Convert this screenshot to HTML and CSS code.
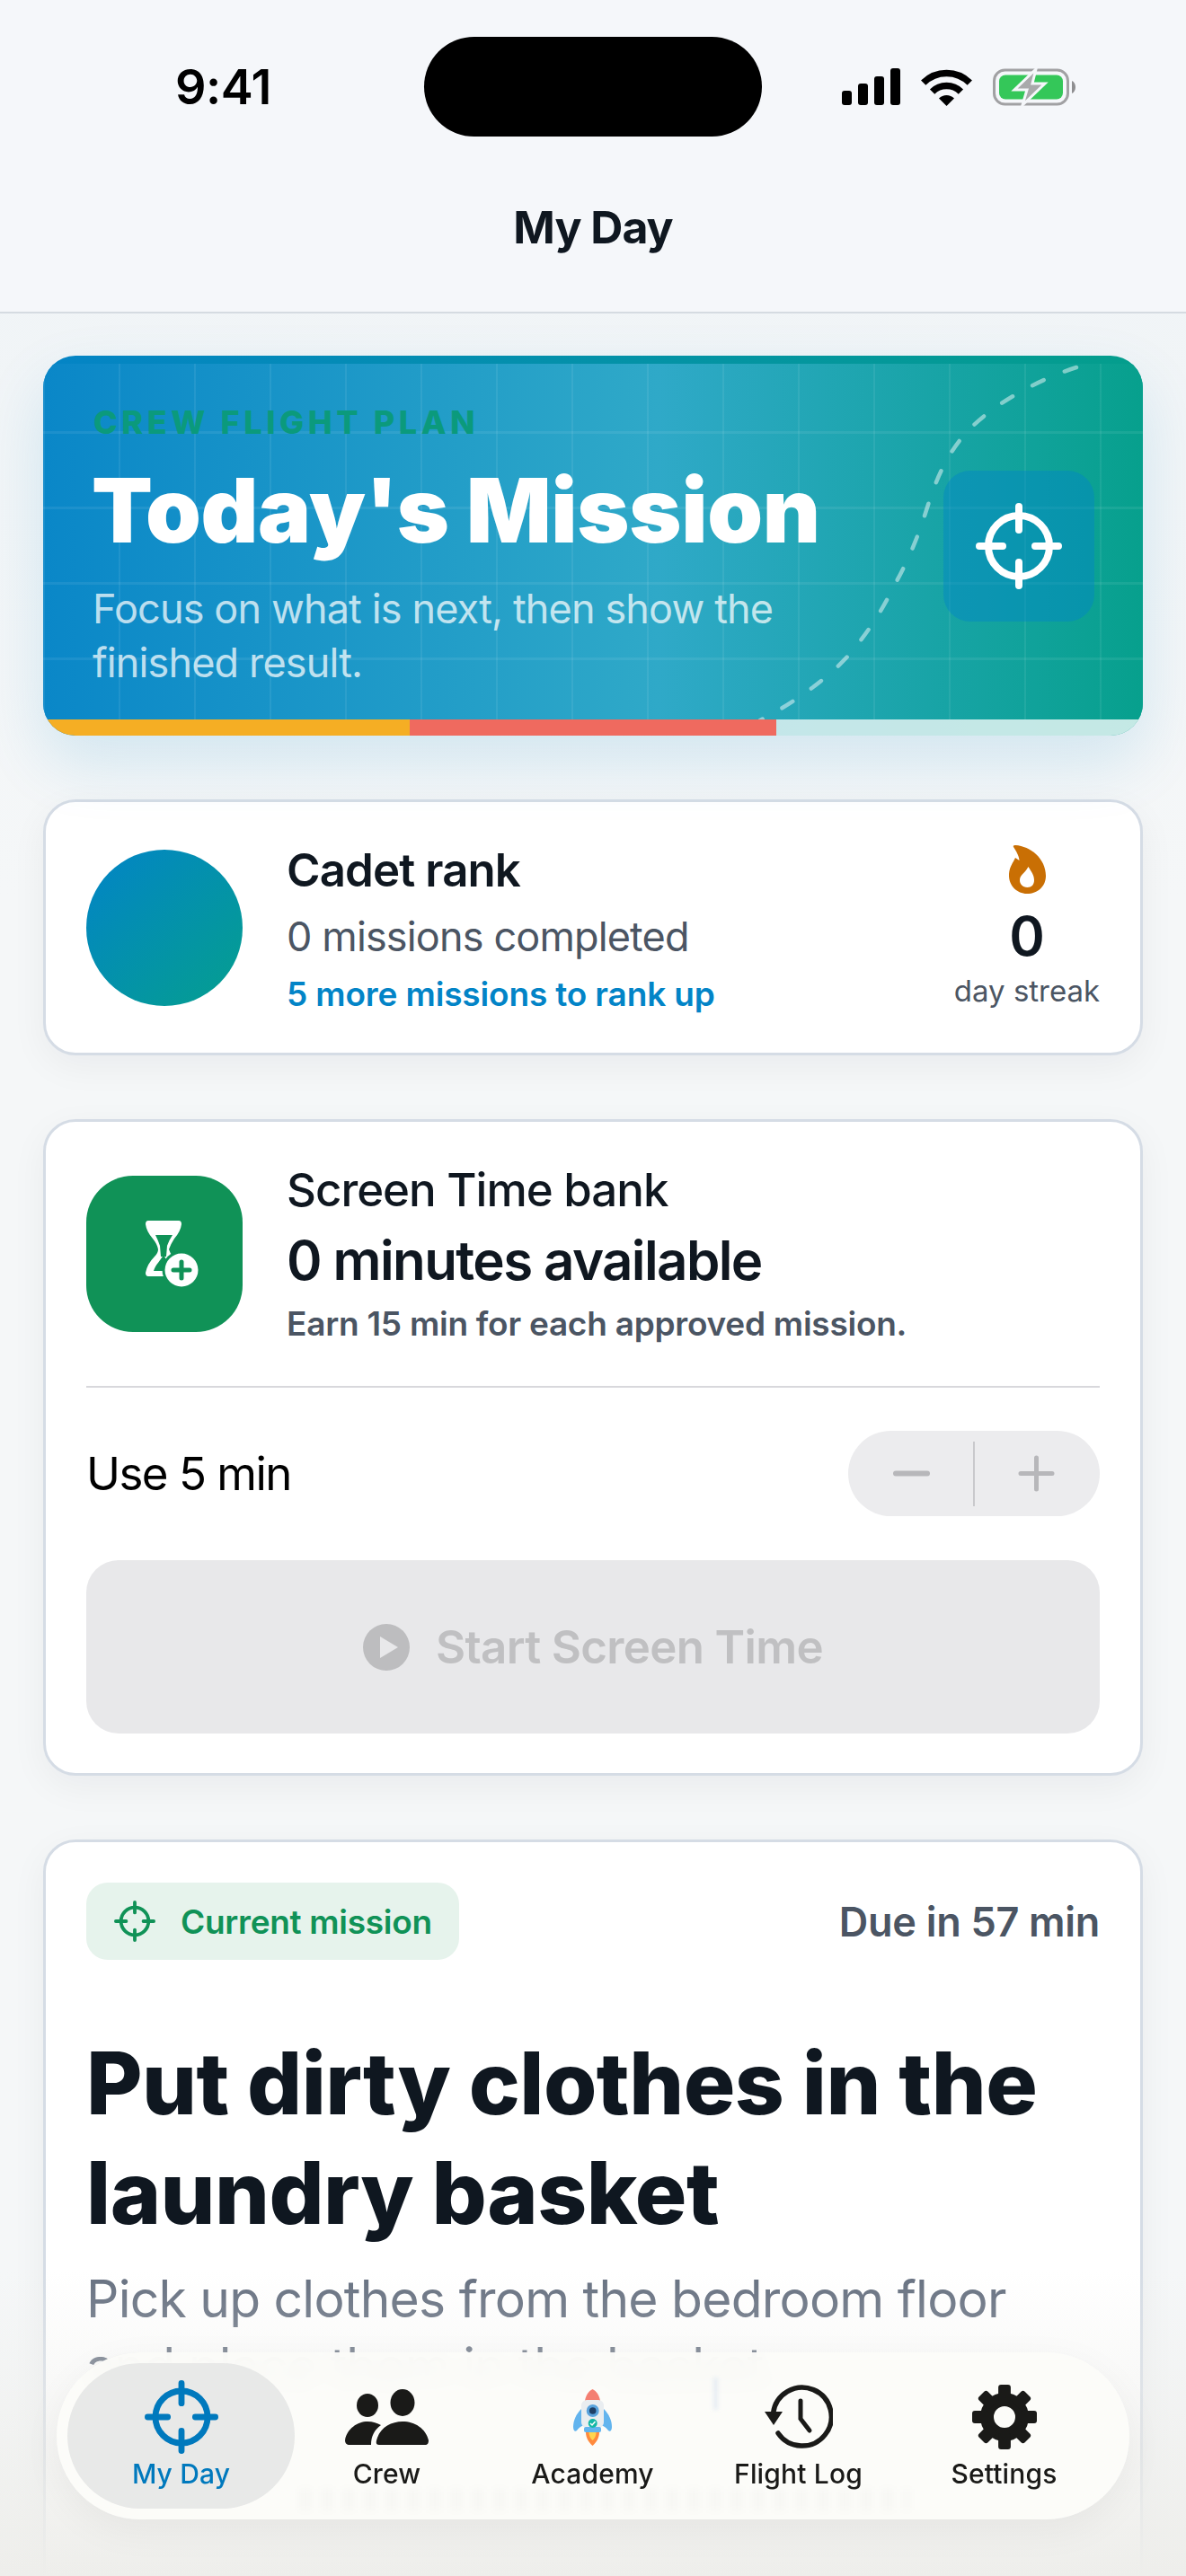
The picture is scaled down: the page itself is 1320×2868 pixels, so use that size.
FILE: index.html
```html
<!DOCTYPE html>
<html lang="en">
<head>
  <meta charset="UTF-8">
  <meta name="viewport" content="width=device-width, initial-scale=1">
  <title>My Day</title>
  <link rel="stylesheet" href="styles.css">
</head>
<body>

<div class="screen">
  <header class="top">
    <div class="status">
      <span class="clock">9:41</span>
      <div class="island"></div>
      <div class="status-icons">
        <svg width="65" height="41" viewBox="0 0 65 41" fill="#000">
          <rect x="0" y="25" width="11" height="16" rx="3"/>
          <rect x="18" y="17" width="11" height="24" rx="3"/>
          <rect x="36" y="9" width="11" height="32" rx="3"/>
          <rect x="54" y="0" width="11" height="41" rx="3"/>
        </svg>
        <svg width="57" height="42" viewBox="0 0 57 42" fill="none" stroke="#000" stroke-width="7.5">
          <path d="M2.7 16.2A36.5 36.5 0 0 1 54.3 16.2"/>
          <path d="M12.6 26.1A22.5 22.5 0 0 1 44.4 26.1"/>
          <path d="M28.5 42L20 33.5A12 12 0 0 1 37 33.5Z" fill="#000" stroke="none"/>
        </svg>
        <svg width="92" height="42" viewBox="0 0 92 42">
          <rect x="1.5" y="2" width="82" height="38" rx="12" fill="none" stroke="#a1a1a3" stroke-width="3"/>
          <rect x="7" y="7.5" width="71" height="27" rx="7" fill="#34c759"/>
          <path d="M88 14c2.500 1 4 4 4 7s-1.500 6-4 7z" fill="#8e8e90"/>
          <path d="M48 1L24 24H38L33 41L58 17H44Z" fill="#a9a9ab" stroke="#f5f7fa" stroke-width="3"/>
        </svg>
      </div>
    </div>
    <h1 class="page-title">My Day</h1>
  </header>

  <main class="content">
    <section class="hero">
      <div class="hero-body">
        <svg class="hero-path" width="360" height="396" viewBox="0 0 360 396" fill="none">
          <path d="M354 4C316 16 270 40 240 68C212 94 198 128 188 160C178 192 168 216 154 242C140 270 128 290 110 313C90 340 50 372 2 397" stroke="#fff" stroke-opacity=".48" stroke-width="4.500" stroke-linecap="round" stroke-dasharray="14 25"/>
        </svg>
        <div class="hero-text">
          <div class="eyebrow">CREW FLIGHT PLAN</div>
          <h2 class="hero-title">Today's Mission</h2>
          <p class="hero-sub">Focus on what is next, then show the finished result.</p>
        </div>
        <div class="hero-tile">
          <svg width="96" height="96" viewBox="0 0 24 24" fill="none" stroke="#fff" stroke-width="2" stroke-linecap="round">
            <circle cx="12" cy="12" r="8.500"/>
            <path d="M12 1V7.500M12 16.500V23M1 12H7.500M16.500 12H23"/>
          </svg>
        </div>
      </div>
      <div class="hero-bar">
        <span class="seg-orange"></span>
        <span class="seg-coral"></span>
        <span class="seg-pale"></span>
      </div>
    </section>

    <section class="card rank">
      <div class="avatar"></div>
      <div class="rank-info">
        <div class="rank-name">Cadet rank</div>
        <div class="rank-count">0 missions completed</div>
        <div class="rank-next">5 more missions to rank up</div>
      </div>
      <div class="streak">
        <svg width="41" height="55" viewBox="0 0 41 55">
          <path fill="#c96f04" fill-rule="evenodd" d="M5 3Q4 1 7 1C24 2 41 16 41 35C41 47 32 55 20 55C9 55 0 46 0 35C0 28 2 24 5 19L7 15L11.500 18C11 12 8 8 5 3ZM20.500 48C15 48 12 44 12 40C12 34 17 33 21.500 25C25 31 28 34 28 40C28 45 25 48 20.500 48Z"/>
        </svg>
        <div class="streak-num">0</div>
        <div class="streak-label">day streak</div>
      </div>
    </section>

    <section class="card bank">
      <div class="bank-top">
        <div class="bank-tile">
          <svg width="59" height="74" viewBox="0 0 59 74">
            <path fill="#fff" d="M3 0H37Q40 0 40 4Q39 12 32 20Q28 26 26 32Q27 36 31 41L32 62H3Q0 62 0 58Q2 48 10 40Q14 36 14 32Q13 26 8 20Q1 12 0 4Q0 0 3 0Z"/>
            <path fill="#109257" d="M11 16H30Q26 22 24 28L23 40H17L16 28Q14 22 11 16Z"/>
            <path fill="#109257" d="M9 56C11 49 17 44 20 38L27 50L24 56Z"/>
            <circle cx="40" cy="55" r="21.500" fill="#109257"/>
            <circle cx="40" cy="55" r="18.500" fill="#fff"/>
            <path stroke="#109257" stroke-width="5" stroke-linecap="round" d="M40 46V64M31 55H49"/>
          </svg>
        </div>
        <div class="bank-info">
          <div class="bank-name">Screen Time bank</div>
          <div class="bank-minutes">0 minutes available</div>
          <div class="bank-note">Earn 15 min for each approved mission.</div>
        </div>
      </div>
      <div class="use-row">
        <span class="use-label">Use 5 min</span>
        <div class="stepper">
          <svg width="41" height="41" viewBox="0 0 41 41" stroke="#b7b7ba" stroke-width="6" stroke-linecap="round"><path d="M3 20.500H38"/></svg>
          <span class="stepper-line"></span>
          <svg width="41" height="41" viewBox="0 0 41 41" stroke="#b7b7ba" stroke-width="5" stroke-linecap="round"><path d="M3 20.500H38M20.500 3V38"/></svg>
        </div>
      </div>
      <button class="start-btn">
        <svg width="52" height="52" viewBox="0 0 52 52">
          <circle cx="26" cy="26" r="26" fill="#bdbdbf"/>
          <path d="M19 14L39 26L19 38Z" fill="#e8e8ea"/>
        </svg>
        Start Screen Time
      </button>
    </section>

    <section class="card mission">
      <div class="mission-top">
        <div class="mission-badge">
          <svg width="46" height="46" viewBox="0 0 24 24" fill="none" stroke="#109257" stroke-width="2" stroke-linecap="round">
            <circle cx="12" cy="12" r="8"/>
            <path d="M12 1V7M12 17V23M1 12H7M17 12H23"/>
          </svg>
          Current mission
        </div>
        <span class="mission-due">Due in 57 min</span>
      </div>
      <h2 class="mission-title">Put dirty clothes in the laundry basket</h2>
      <p class="mission-desc">Pick up clothes from the bedroom floor and place them in the basket.</p>
    </section>
  </main>

  <div class="bottom-fade"></div>

  <nav class="tabbar">
    <span class="ghost-mark"></span>
    <span class="ghost-line"></span>
    <a class="tab active">
      <svg width="82" height="82" viewBox="0 0 24 24" fill="none" stroke="#0079bd" stroke-width="2" stroke-linecap="round">
        <circle cx="12" cy="12" r="8.500"/>
        <path d="M12 1V7.500M12 16.500V23M1 12H7.500M16.500 12H23"/>
      </svg>
      <span>My Day</span>
    </a>
    <a class="tab">
      <svg width="93" height="62" viewBox="0 0 93 62" fill="#1a1a18">
        <ellipse cx="64" cy="15" rx="13.500" ry="15"/>
        <ellipse cx="25" cy="18" rx="12" ry="13"/>
        <path d="M38 62C33 62 35 57 36 54C40 42 52 36 64 36C78 36 90 44 93 57C93 60 92 62 89 62Z"/>
        <path d="M0 57C2 44 14 36 25 36C31 36 36 38 40 40C33 45 29 52 29 62H5C2 62 0 60 0 57Z"/>
      </svg>
      <span>Crew</span>
    </a>
    <a class="tab">
      <svg width="43" height="64" viewBox="0 0 43 64">
        <path fill="#ff8a3d" d="M14 49H29C29 55 26 60 21.500 64C17 60 14 55 14 49Z"/>
        <path fill="#ffd54f" d="M17.500 49H25.500C25.500 53 24 56 21.500 58C19 56 17.500 53 17.500 49Z"/>
        <path fill="#62b4ee" d="M9 23C3 29 0 36 0 43C0 47 2 49 4 47C6 44 9 42 12 41ZM34 23C40 29 43 36 43 43C43 47 41 49 39 47C37 44 34 42 31 41Z"/>
        <path fill="#f47f72" d="M21.500 1C26 3 29 8 30 14H13C14 8 17 3 21.500 1Z"/>
        <rect x="9" y="13" width="25" height="31" rx="6" fill="#e9edf0"/>
        <rect x="12" y="43" width="19" height="6" rx="2" fill="#62b4ee"/>
        <circle cx="21.700" cy="25" r="7" fill="#5aa3dd"/>
        <circle cx="21.700" cy="25" r="3.800" fill="#1f3f66"/>
        <circle cx="21.700" cy="39" r="5" fill="#14b8a6"/>
        <path d="M19 39L21 41L24.500 37" fill="none" stroke="#fff" stroke-width="1.500"/>
      </svg>
      <span>Academy</span>
    </a>
    <a class="tab">
      <svg width="76" height="70" viewBox="0 0 76 70" fill="none" stroke="#1a1a18" stroke-width="5.500" stroke-linecap="round">
        <path d="M15 53A32.500 32.500 0 1 0 9.500 31"/>
        <path d="M40 17V37L50 50" stroke-width="5"/>
        <path d="M0 29H20L10 44Z" fill="#1a1a18" stroke="none"/>
      </svg>
      <span>Flight Log</span>
    </a>
    <a class="tab">
      <svg width="72" height="72" viewBox="0 0 24 24" fill="none">
        <circle cx="12" cy="12" r="6.500" stroke="#1a1a18" stroke-width="5"/>
        <g fill="#1a1a18">
          <rect x="9.700" y="0" width="4.600" height="6" rx="1"/>
          <rect x="9.700" y="0" width="4.600" height="6" rx="1" transform="rotate(45 12 12)"/>
          <rect x="9.700" y="0" width="4.600" height="6" rx="1" transform="rotate(90 12 12)"/>
          <rect x="9.700" y="0" width="4.600" height="6" rx="1" transform="rotate(135 12 12)"/>
          <rect x="9.700" y="0" width="4.600" height="6" rx="1" transform="rotate(180 12 12)"/>
          <rect x="9.700" y="0" width="4.600" height="6" rx="1" transform="rotate(225 12 12)"/>
          <rect x="9.700" y="0" width="4.600" height="6" rx="1" transform="rotate(270 12 12)"/>
          <rect x="9.700" y="0" width="4.600" height="6" rx="1" transform="rotate(315 12 12)"/>
        </g>
      </svg>
      <span>Settings</span>
    </a>
  </nav>
</div>

</body>
</html>
```

FILE: styles.css
```css
* { box-sizing: border-box; }
html, body { margin: 0; padding: 0; }
body {
  font-family: Inter, 'Noto Sans', sans-serif;
  color: #0f1720;
  background: #f5f7f8;
}
h1, h2, p { margin: 0; }

.screen {
  position: relative;
  width: 1320px;
  height: 2868px;
  overflow: hidden;
  background: linear-gradient(#eef3f6, #f5f7f8 1000px);
}

/* header */
.top {
  height: 349px;
  background: #f5f7fa;
  border-bottom: 2px solid #d5dbe1;
}
.status {
  display: flex;
  align-items: center;
  padding-top: 41px;
  height: 152px;
}
.clock {
  width: 472px;
  padding-left: 195px;
  font-size: 54px;
  font-weight: 600;
  color: #000;
  letter-spacing: -0.5px;
}
.island {
  width: 376px;
  height: 111px;
  border-radius: 56px;
  background: #000;
}
.status-icons {
  display: flex;
  align-items: center;
  gap: 23px;
  padding-left: 89px;
}
.page-title {
  margin-top: 68px;
  text-align: center;
  font-size: 50px;
  line-height: 66px;
  font-weight: 700;
  letter-spacing: -1px;
}

/* cards */
.content {
  display: flex;
  flex-direction: column;
  gap: 71px;
  padding: 47px 48px 0;
}
.card {
  background: #fff;
  border: 3px solid #d5dce5;
  border-radius: 36px;
  box-shadow: 0 12px 40px rgba(15, 23, 42, 0.05);
}

/* hero */
.hero {
  position: relative;
  height: 423px;
  flex: none;
  padding-top: 9px;
  border-radius: 36px;
  overflow: hidden;
  background: linear-gradient(90deg, #0484c6, #049e8c);
  box-shadow: 0 30px 70px rgba(2, 132, 199, 0.14);
  display: flex;
  flex-direction: column;
}
.hero-body {
  position: relative;
  flex: 1;
  display: flex;
  align-items: center;
  justify-content: space-between;
  padding: 0 54px 0 56px;
  background-image:
    linear-gradient(rgba(255, 255, 255, 0.07) 3px, transparent 3px),
    linear-gradient(90deg, rgba(255, 255, 255, 0.07) 2px, transparent 2px),
    linear-gradient(90deg, #0a87c8 0%, #2fa9c8 56%, #07a08d 100%);
  background-size: 84px 84px, 84px 84px, 100% 100%;
  background-position: 0 75px, 0 0, 0 0;
}
.hero-path {
  position: absolute;
  right: 68px;
  top: 0;
}
.hero-text {
  position: relative;
  width: 860px;
  padding-top: 9px;
}
.eyebrow {
  font-size: 36px;
  line-height: 44px;
  font-weight: 800;
  letter-spacing: 4.6px;
  color: #0b9a7c;
}
.hero-title {
  margin-top: 18px;
  margin-left: -2px;
  font-size: 99px;
  line-height: 116px;
  font-weight: 900;
  letter-spacing: -0.3px;
  color: #fff;
}
.hero-sub {
  margin-top: 22px;
  margin-left: -1px;
  font-size: 45px;
  line-height: 60px;
  letter-spacing: -0.86px;
  color: rgba(255, 255, 255, 0.72);
}
.hero-tile {
  position: relative;
  width: 168px;
  height: 168px;
  margin-top: 10px;
  border-radius: 30px;
  background: rgba(2, 132, 199, 0.45);
  display: flex;
  align-items: center;
  justify-content: center;
}
.hero-bar {
  display: flex;
  height: 18px;
}
.hero-bar span { flex: 1; }
.seg-orange { background: #f5ae24; }
.seg-coral { background: #ef6a5f; }
.seg-pale { background: rgba(255, 255, 255, 0.77); }

/* rank */
.rank {
  flex: none;
  height: 285px;
  display: flex;
  align-items: center;
  padding: 0 45px;
}
.avatar {
  width: 174px;
  height: 174px;
  border-radius: 50%;
  background: linear-gradient(135deg, #0284c7, #059f8e);
  flex: none;
}
.rank-info {
  flex: 1;
  margin-left: 49px;
  padding-top: 6px;
}
.rank-name {
  font-size: 51px;
  line-height: 64px;
  font-weight: 600;
  letter-spacing: -0.9px;
}
.rank-count {
  margin-top: 10px;
  font-size: 45px;
  line-height: 64px;
  letter-spacing: -0.85px;
  color: #4b5563;
}
.rank-next {
  margin-top: 4px;
  font-size: 37px;
  line-height: 56px;
  font-weight: 600;
  letter-spacing: -0.15px;
  color: #0284c7;
}
.streak {
  display: flex;
  flex-direction: column;
  align-items: center;
  width: 162px;
  flex: none;
}
.streak-num {
  margin-top: 10px;
  font-size: 60px;
  line-height: 74px;
  font-weight: 600;
}
.streak-label {
  margin-top: 2px;
  font-size: 33px;
  line-height: 44px;
  white-space: nowrap;
  color: #4b5563;
}

/* bank */
.bank {
  flex: none;
  height: 731px;
  padding: 0 45px;
}
.bank-top {
  display: flex;
  align-items: center;
  height: 296px;
  border-bottom: 2px solid #d8d8dc;
}
.bank-tile {
  width: 174px;
  height: 174px;
  border-radius: 52px;
  background: #109257;
  display: flex;
  align-items: center;
  justify-content: center;
  flex: none;
}
.bank-tile svg { margin-left: 16px; }
.bank-info { margin-left: 49px; }
.bank-name {
  margin-bottom: 6px;
  font-size: 51px;
  line-height: 64px;
  font-weight: 500;
  letter-spacing: -1px;
}
.bank-minutes {
  font-size: 60px;
  line-height: 80px;
  font-weight: 600;
  letter-spacing: -1.6px;
}
.bank-note {
  margin-top: 6px;
  font-size: 37px;
  line-height: 50px;
  font-weight: 600;
  letter-spacing: -0.25px;
  color: #4b5563;
}
.use-row {
  display: flex;
  align-items: center;
  justify-content: space-between;
  margin-top: 48px;
}
.use-label {
  font-size: 51px;
  letter-spacing: -1.5px;
  color: #000;
}
.stepper {
  position: relative;
  width: 280px;
  height: 95px;
  border-radius: 48px;
  background: #ececee;
  display: flex;
  align-items: center;
  justify-content: space-between;
  padding: 0 50px;
}
.stepper-line {
  width: 2px;
  height: 72px;
  background: #c9c9cc;
}
.start-btn {
  width: 100%;
  height: 193px;
  margin-top: 49px;
  border: none;
  border-radius: 36px;
  background: #e8e8ea;
  color: #c0c0c2;
  font-family: inherit;
  font-size: 51px;
  font-weight: 600;
  letter-spacing: -0.65px;
  display: flex;
  align-items: center;
  justify-content: center;
  gap: 29px;
}

/* current mission */
.mission {
  flex: none;
  height: 1000px;
  padding: 45px;
}
.mission-top {
  display: flex;
  align-items: center;
  justify-content: space-between;
}
.mission-badge {
  height: 86px;
  width: 415px;
  padding-left: 31px;
  border-radius: 24px;
  background: #e6f3ec;
  color: #109257;
  font-size: 37px;
  font-weight: 600;
  letter-spacing: -0.3px;
  display: flex;
  align-items: center;
  gap: 28px;
}
.mission-due {
  font-size: 45px;
  font-weight: 600;
  letter-spacing: -0.3px;
  color: #4b5563;
}
.mission-title {
  margin-top: 76px;
  font-size: 96px;
  line-height: 122px;
  font-weight: 800;
  letter-spacing: -0.55px;
}
.mission-desc {
  margin-top: 20px;
  font-size: 57px;
  line-height: 75px;
  letter-spacing: -0.77px;
  color: #667080;
}

/* tab bar */
.bottom-fade {
  position: absolute;
  left: 0;
  right: 0;
  bottom: 0;
  height: 340px;
  background: linear-gradient(rgba(238, 238, 235, 0), #eeeeeb);
}
.tabbar {
  position: absolute;
  left: 63px;
  top: 2619px;
  width: 1194px;
  height: 186px;
  padding: 12px 24px;
  border-radius: 93px;
  background: rgba(252, 252, 249, 0.94);
  backdrop-filter: blur(12px);
  box-shadow: 0 12px 44px rgba(0, 0, 0, 0.05);
  display: flex;
  isolation: isolate;
}
.tab {
  position: relative;
  flex: 0 0 229px;
  display: flex;
  flex-direction: column;
  align-items: center;
  font-size: 30px;
  line-height: 38px;
  font-weight: 500;
  letter-spacing: 0.15px;
  color: #1a1a18;
}
.tab svg {
  flex: none;
  height: 82px;
  margin-top: 19px;
  margin-bottom: 3px;
}
.tab.active { color: #0079bd; }
.tab.active::before {
  content: "";
  position: absolute;
  top: 0;
  bottom: 0;
  left: -12px;
  right: -12px;
  border-radius: 81px;
  background: #e8e9e8;
  z-index: -1;
}
/* faint shapes of the page seen through the glass */
.ghost-mark {
  position: absolute;
  left: 731px;
  top: 28px;
  width: 5px;
  height: 36px;
  background: rgba(150, 180, 220, 0.2);
  filter: blur(2px);
}
.ghost-line {
  position: absolute;
  left: 270px;
  top: 152px;
  width: 680px;
  height: 24px;
  background: repeating-linear-gradient(90deg, rgba(0, 0, 0, 0.02) 0 14px, transparent 14px 24px);
  filter: blur(4px);
  z-index: -1;
}
```
